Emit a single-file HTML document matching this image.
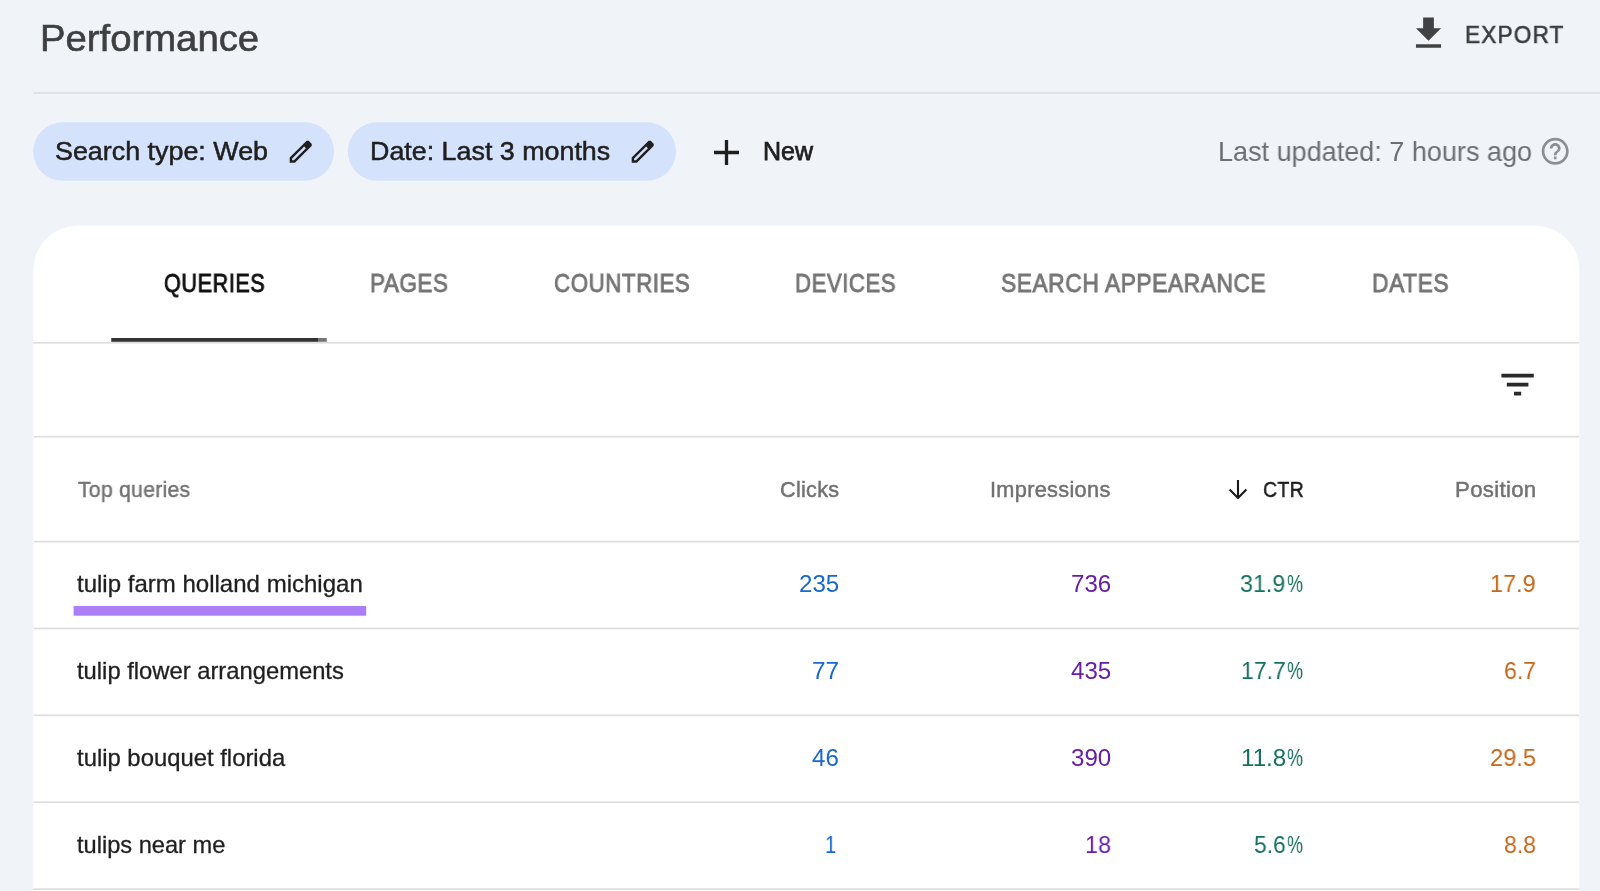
<!DOCTYPE html>
<html><head><meta charset="utf-8"><title>Performance</title>
<style>
html,body{margin:0;padding:0}
body{width:1600px;height:891px;position:relative;overflow:hidden;background:#f0f4f9;font-family:"Liberation Sans",sans-serif}
.t{position:absolute;white-space:nowrap;line-height:1;transform-origin:0 0;font-weight:400;will-change:transform}
.a{position:absolute}
</style></head><body>
<svg class="a" style="left:0;top:0" width="1600" height="891" viewBox="0 0 1600 891"><rect x="33.2" y="92.15" width="1567" height="1.7" fill="#dee0e1"/><rect x="33.2" y="122.3" width="300.8" height="58.4" rx="29.2" fill="#d5e2fb"/><rect x="347.8" y="122.3" width="328.2" height="58.4" rx="29.2" fill="#d5e2fb"/><path fill="#fff" d="M33.4 900V269.800a44 44 0 0 1 44-44H1535.200a44 44 0 0 1 44 44V900z"/><rect x="33.4" y="341.90" width="1545.8" height="1.7" fill="#dedede"/><rect x="33.4" y="435.85" width="1545.8" height="1.7" fill="#dedede"/><rect x="33.4" y="540.75" width="1545.8" height="1.7" fill="#dedede"/><rect x="33.4" y="627.65" width="1545.8" height="1.7" fill="#dedede"/><rect x="33.4" y="714.50" width="1545.8" height="1.7" fill="#dedede"/><rect x="33.4" y="801.35" width="1545.8" height="1.7" fill="#dedede"/><rect x="33.4" y="888.25" width="1545.8" height="1.7" fill="#dedede"/><rect x="111.25" y="338" width="206.75" height="3.8" fill="#333"/><rect x="318" y="338" width="8.75" height="3.8" fill="#777"/><rect x="73.6" y="606" width="292.6" height="9.7" fill="#ac7ef7"/></svg>
<svg class="a" style="left:1407px;top:12.3px" width="43" height="43" viewBox="0 0 24 24"><path fill="#414244" d="M19 9h-4V3H9v6H5l7 7 7-7zM5 18v2h14v-2H5z"/></svg>
<svg class="a" style="left:286.26px;top:136.99px" width="29.50" height="29.50" viewBox="0 -960 960 960"><path fill="#1f1f1f" d="M200-200h57l391-391-57-57-391 391v57Zm-80 80v-170l528-527q12-11 26.500-17t30.500-6q16 0 31 6t26 18l55 56q12 11 17.500 26t5.500 30q0 16-5.500 30.500T817-647L290-120H120Z"/></svg>
<svg class="a" style="left:628.06px;top:136.99px" width="29.50" height="29.50" viewBox="0 -960 960 960"><path fill="#1f1f1f" d="M200-200h57l391-391-57-57-391 391v57Zm-80 80v-170l528-527q12-11 26.500-17t30.500-6q16 0 31 6t26 18l55 56q12 11 17.500 26t5.500 30q0 16-5.500 30.500T817-647L290-120H120Z"/></svg>
<svg class="a" style="left:713.9px;top:140.0px" width="25" height="25" viewBox="0 0 25 25"><path d="M12.5 0v25M0 12.5h25" stroke="#1f1f1f" stroke-width="3.3" fill="none"/></svg>
<svg class="a" style="left:1539.20px;top:135.10px" width="32.40" height="32.40" viewBox="0 0 24 24"><path fill="#8c8e91" d="M11 18h2v-2h-2v2zm1-16C6.48 2 2 6.48 2 12s4.48 10 10 10 10-4.48 10-10S17.52 2 12 2zm0 18c-4.41 0-8-3.59-8-8s3.59-8 8-8 8 3.59 8 8-3.59 8-8 8zm0-14c-2.21 0-4 1.79-4 4h2c0-1.1.9-2 2-2s2 .9 2 2c0 2-3 1.75-3 5h2c0-2.250 3-2.500 3-5 0-2.210-1.790-4-4-4z"/></svg>
<svg class="a" style="left:1496.1px;top:362.55px" width="43.2" height="43.2" viewBox="0 0 24 24"><path fill="#2a2a2a" d="M10 18h4v-2h-4v2zM3 6v2h18V6H3zm3 7h12v-2H6v2z"/></svg>
<svg class="a" style="left:1227.75px;top:478.85px" width="20" height="20.5" viewBox="0 0 20 20.5"><path d="M10 1v17.5M1.6 10.6l8.400 8.400 8.400-8.400" stroke="#1a1a1a" stroke-width="2.1" fill="none"/></svg>
<header>
<div class="t" id="title" style="left:39.88px;top:21.00px;font-size:36.6px;color:#3e3f41;-webkit-text-stroke:0.6px #3e3f41;transform:scaleX(1.0464)">Performance</div>
<div class="t" id="export" style="left:1464.62px;top:23.00px;font-size:24.5px;color:#3b3c3e;-webkit-text-stroke:0.65px #3b3c3e;letter-spacing:1.4px;transform:scaleX(0.9173)">EXPORT</div>
</header>
<section>
<div class="t" id="chip1" style="left:54.94px;top:139.00px;font-size:25px;color:#1f1f1f;-webkit-text-stroke:0.5px #1f1f1f;transform:scaleX(1.0745)">Search type: Web</div>
<div class="t" id="chip2" style="left:369.72px;top:139.00px;font-size:25px;color:#1f1f1f;-webkit-text-stroke:0.5px #1f1f1f;transform:scaleX(1.0736)">Date: Last 3 months</div>
<div class="t" id="new" style="left:762.71px;top:139.00px;font-size:25px;color:#1f1f1f;-webkit-text-stroke:0.75px #1f1f1f;transform:scaleX(0.9959)">New</div>
<div class="t" id="upd" style="left:1217.89px;top:138.00px;font-size:27.2px;color:#6c6e71;transform:scaleX(0.9942)">Last updated: 7 hours ago</div>
</section>
<nav>
<div class="t" id="tab1" style="left:164.35px;top:271.00px;font-size:25px;color:#111111;-webkit-text-stroke:0.85px #111111;letter-spacing:0.6px;transform:scaleX(0.8671)">QUERIES</div>
<div class="t" id="tab2" style="left:370.25px;top:271.00px;font-size:25px;color:#757575;-webkit-text-stroke:0.85px #757575;letter-spacing:0.6px;transform:scaleX(0.8983)">PAGES</div>
<div class="t" id="tab3" style="left:554.03px;top:271.00px;font-size:25px;color:#757575;-webkit-text-stroke:0.85px #757575;letter-spacing:0.6px;transform:scaleX(0.8937)">COUNTRIES</div>
<div class="t" id="tab4" style="left:795.33px;top:271.00px;font-size:25px;color:#757575;-webkit-text-stroke:0.85px #757575;letter-spacing:0.6px;transform:scaleX(0.8870)">DEVICES</div>
<div class="t" id="tab5" style="left:1001.32px;top:271.00px;font-size:25px;color:#757575;-webkit-text-stroke:0.85px #757575;letter-spacing:0.6px;transform:scaleX(0.9118)">SEARCH APPEARANCE</div>
<div class="t" id="tab6" style="left:1371.63px;top:271.00px;font-size:25px;color:#757575;-webkit-text-stroke:0.85px #757575;letter-spacing:0.6px;transform:scaleX(0.9125)">DATES</div>
</nav>
<div>
<div class="t" id="h1" style="left:77.65px;top:479.00px;font-size:21.6px;color:#717171;-webkit-text-stroke:0.45px #717171;letter-spacing:0.3px;transform:scaleX(0.9782)">Top queries</div>
<div class="t" id="h2" style="left:779.75px;top:479.00px;font-size:21.6px;color:#717171;-webkit-text-stroke:0.45px #717171;letter-spacing:0.3px;transform:scaleX(1.0000)">Clicks</div>
<div class="t" id="h3" style="left:990.01px;top:479.00px;font-size:21.6px;color:#717171;-webkit-text-stroke:0.45px #717171;letter-spacing:0.3px;transform:scaleX(1.0073)">Impressions</div>
<div class="t" id="h4" style="left:1263.07px;top:479.00px;font-size:21.6px;color:#1a1a1a;-webkit-text-stroke:0.45px #1a1a1a;letter-spacing:0.3px;transform:scaleX(0.9023)">CTR</div>
<div class="t" id="h5" style="left:1454.58px;top:479.00px;font-size:21.6px;color:#717171;-webkit-text-stroke:0.45px #717171;letter-spacing:0.3px;transform:scaleX(1.0290)">Position</div>
</div>
<div>
<div class="t" id="q1" style="left:77.23px;top:573.00px;font-size:23.2px;color:#1f1f1f;-webkit-text-stroke:0.3px #1f1f1f;transform:scaleX(1.0361)">tulip farm holland michigan</div>
<div class="t" id="q2" style="left:77.27px;top:660.00px;font-size:23.2px;color:#1f1f1f;-webkit-text-stroke:0.3px #1f1f1f;transform:scaleX(1.0250)">tulip flower arrangements</div>
<div class="t" id="q3" style="left:76.94px;top:747.00px;font-size:23.2px;color:#1f1f1f;-webkit-text-stroke:0.3px #1f1f1f;transform:scaleX(1.0285)">tulip bouquet florida</div>
<div class="t" id="q4" style="left:77.27px;top:834.00px;font-size:23.2px;color:#1f1f1f;-webkit-text-stroke:0.3px #1f1f1f;transform:scaleX(1.0181)">tulips near me</div>
<div class="t" id="n00" style="left:799.15px;top:572.00px;font-size:24.1px;color:#1967d2;transform:scaleX(0.9974)">235</div>
<div class="t" id="n01" style="left:811.73px;top:659.00px;font-size:24.1px;color:#1967d2;transform:scaleX(1.0122)">77</div>
<div class="t" id="n02" style="left:811.93px;top:746.00px;font-size:24.1px;color:#1967d2;transform:scaleX(0.9941)">46</div>
<div class="t" id="n03" style="left:825.06px;top:833.00px;font-size:24.1px;color:#1967d2;transform:scaleX(0.8286)">1</div>
<div class="t" id="n10" style="left:1070.65px;top:572.00px;font-size:24.1px;color:#681da8;transform:scaleX(0.9974)">736</div>
<div class="t" id="n11" style="left:1071.10px;top:659.00px;font-size:24.1px;color:#681da8;transform:scaleX(0.9961)">435</div>
<div class="t" id="n12" style="left:1070.90px;top:746.00px;font-size:24.1px;color:#681da8;transform:scaleX(1.0013)">390</div>
<div class="t" id="n13" style="left:1084.80px;top:833.00px;font-size:24.1px;color:#681da8;transform:scaleX(0.9708)">18</div>
<div class="t" id="n20" style="left:1240.17px;top:572.00px;font-size:24.1px;color:#16705f;transform:scaleX(0.9644)">31.9</div>
<div class="t" id="n21" style="left:1240.79px;top:659.00px;font-size:24.1px;color:#16705f;transform:scaleX(0.9552)">17.7</div>
<div class="t" id="n22" style="left:1240.50px;top:746.00px;font-size:24.1px;color:#16705f;transform:scaleX(1.0035)">11.8</div>
<div class="t" id="n23" style="left:1253.64px;top:833.00px;font-size:24.1px;color:#16705f;transform:scaleX(0.9486)">5.6</div>
<div class="t" id="n30" style="left:1287.14px;top:572.00px;font-size:24.1px;color:#16705f;transform:scaleX(0.7450)">%</div>
<div class="t" id="n31" style="left:1287.14px;top:659.00px;font-size:24.1px;color:#16705f;transform:scaleX(0.7450)">%</div>
<div class="t" id="n32" style="left:1287.14px;top:746.00px;font-size:24.1px;color:#16705f;transform:scaleX(0.7450)">%</div>
<div class="t" id="n33" style="left:1287.14px;top:833.00px;font-size:24.1px;color:#16705f;transform:scaleX(0.7450)">%</div>
<div class="t" id="n40" style="left:1490.20px;top:572.00px;font-size:24.1px;color:#c5671b;transform:scaleX(0.9727)">17.9</div>
<div class="t" id="n41" style="left:1503.60px;top:659.00px;font-size:24.1px;color:#c5671b;transform:scaleX(0.9568)">6.7</div>
<div class="t" id="n42" style="left:1489.80px;top:746.00px;font-size:24.1px;color:#c5671b;transform:scaleX(0.9821)">29.5</div>
<div class="t" id="n43" style="left:1504.20px;top:833.00px;font-size:24.1px;color:#c5671b;transform:scaleX(0.9560)">8.8</div>
</div>
</body></html>
